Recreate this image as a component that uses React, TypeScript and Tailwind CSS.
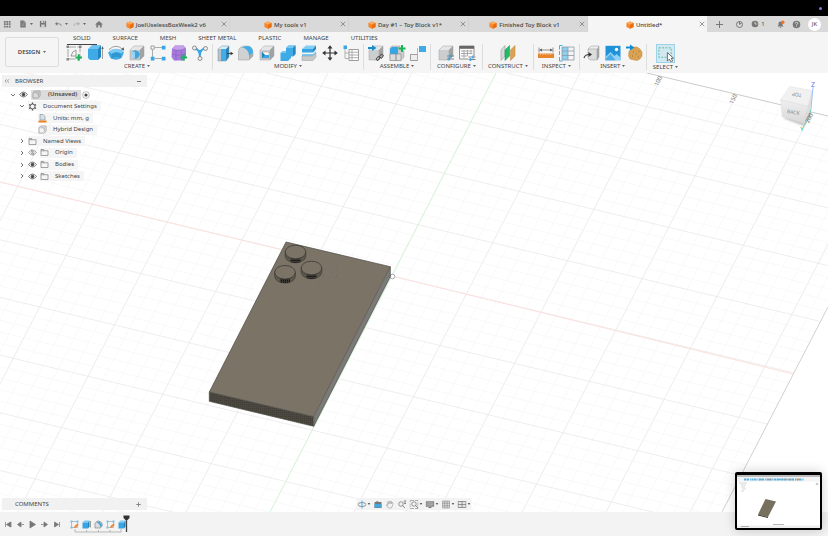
import type { ReactNode } from "react";

interface IconProps {
  children: ReactNode;
  className?: string;
}

interface ToolGroup {
  name: string;
  pad: string;
  tools: { label: string; icon: ReactNode }[];
}

interface TreeItem {
  name: string;
  indent: string;
  arrow?: "open" | "closed";
  eye?: "on" | "off";
  icon: ReactNode;
  root?: boolean;
}

function Icon({ children, className = "size-[18px]" }: IconProps) {
  return (
    <svg viewBox="0 0 18 18" className={`shrink-0 ${className}`} fill="none" aria-hidden="true">
      {children}
    </svg>
  );
}

function Caret({ className = "w-[3px] h-[2px]" }: { className?: string }) {
  return (
    <svg viewBox="0 0 6 4" className={`shrink-0 ${className}`} aria-hidden="true">
      <path d="M0 0h6L3 4z" fill="#666" />
    </svg>
  );
}

// grey box used by several tools, optionally with something drawn over it
function GreyBox({ children }: { children?: ReactNode }) {
  return (
    <Icon>
      <path d="M2 6l4-4h10l-4 4z" fill="#e6e6e6" />
      <path d="M12 6l4-4v10l-4 4z" fill="#a2a2a2" />
      <path d="M2 6h10v10H2z" fill="#cbcdce" />
      <path d="M2 6l4-4h10v10l-4 4H2zM12 16V6l4-4" stroke="#a3a3a3" strokeWidth=".5" />
      {children}
    </Icon>
  );
}

const greenPlus = <path d="M10.500 13.500h6.500M13.750 10.250v6.500" stroke="#17b558" strokeWidth="2" />;

const groups: ToolGroup[] = [
  {
    name: "CREATE",
    pad: "px-[3px]",
    tools: [
      {
        label: "Create sketch",
        icon: (
          <Icon>
            <path d="M3 3h12v12H3z" stroke="#888" strokeWidth=".7" strokeDasharray="8 1.500" />
            <path d="M6 12h5V6Q7 7 6 12z" stroke="#777" strokeWidth=".7" />
            <path d="M1.500 1.500h2.500v2.500H1.500zM14 1.500h2.500v2.500H14zM1.500 14h2.500v2.500H1.500z" fill="#888" />
            {greenPlus}
          </Icon>
        ),
      },
      {
        label: "Extrude",
        icon: (
          <Icon>
            <path d="M2 5l4-4h9l-3 4z" fill="#6cc3f1" />
            <path d="M2 5h10v11H4l-2-2z" fill="#3fabe6" />
            <path d="M12 5l3-4v12l-3 3z" fill="#2385bf" />
            <path d="M16.500 4v11" stroke="#777" strokeWidth=".7" />
            <path d="M15.400 5l1.100-3 1.100 3z" fill="#555" />
          </Icon>
        ),
      },
      {
        label: "Revolve",
        icon: (
          <Icon>
            <path d="M1 8.500Q9 3 17 8.500L14.500 14Q9 17.500 3.500 14z" fill="#3fabe6" />
            <path d="M2 7Q9 2.500 17 7l-3 2.500Q9 6.500 4.500 10z" fill="#7bcaf2" />
            <path d="M4.500 10Q9 7 14 10v4Q9 11 4.500 15z" fill="#2f96d1" />
            <path d="M2 5.500Q9-1 16 5.500" stroke="#777" strokeWidth=".7" />
            <path d="M14.200 5.500l3 1-.7-3.200z" fill="#555" />
          </Icon>
        ),
      },
      {
        label: "Hole",
        icon: (
          <GreyBox>
            <circle cx="7.200" cy="10.500" r="4" fill="#fff" stroke="#888" strokeWidth=".5" />
            <path d="M4 8.500a4 4 0 1 1 1.500 5.500z" fill="#3fa5de" />
            <path d="M4 8a4 4 0 0 1 3 0v6H4.500z" fill="#9ad3ef" />
          </GreyBox>
        ),
      },
      {
        label: "Rectangular pattern",
        icon: (
          <Icon>
            <path d="M6 3.500h7M3.500 6v7M6 14.500h7" stroke="#999" strokeWidth=".8" />
            <path d="M2 2h3.200v3.200H2z" fill="#fff" stroke="#777" strokeWidth=".7" />
            <path d="M12.800 1.800h3.700v3.700h-3.700zM1.800 12.800h3.700v3.700H1.800zM12.800 12.800h3.700v3.700h-3.700z" fill="#36a6e6" />
          </Icon>
        ),
      },
      {
        label: "Create form",
        icon: (
          <Icon>
            <path d="M2 5l3-3.500h8.500L16 5v8l-3 3.500H4L1.500 13z" fill="#a67adb" />
            <path d="M2 5l3-3.500h8.500L16 4l-4.500 2H5z" fill="#c3a0e8" />
            <path d="M2 5q4 2 9.500 1L16 4M11.500 6v10.500M6 6v10.500M2 10q5 2 9.500 1l4.500-2" stroke="#8656c0" strokeWidth=".5" />
            {greenPlus}
          </Icon>
        ),
      },
      {
        label: "Automated modeling",
        icon: (
          <Icon>
            <path d="M3.500 4.500Q9 5 9 14M14.500 4.500Q9 5 9 11M7 7h4" stroke="#36a6e6" strokeWidth="1.900" />
            <circle cx="3.500" cy="4" r="2" fill="#eee" stroke="#777" strokeWidth=".8" />
            <circle cx="14.500" cy="4.500" r="2" fill="#eee" stroke="#777" strokeWidth=".8" />
            <circle cx="9" cy="14.500" r="2" fill="#eee" stroke="#777" strokeWidth=".8" />
          </Icon>
        ),
      },
    ],
  },
  {
    name: "MODIFY",
    pad: "px-[3px]",
    tools: [
      {
        label: "Press pull",
        icon: (
          <Icon>
            <path d="M2 5l4-3h7l-3 3z" fill="#d8edf6" />
            <path d="M2 5h5v12H2z" fill="#b9c2c6" />
            <path d="M5 5h5v12H5z" fill="#43ace6" />
            <path d="M10 5l3-3v11l-3 4z" fill="#2683bb" />
            <path d="M2 5l4-3h7v11l-3 4H2z" stroke="#7790a0" strokeWidth=".5" />
            <path d="M11 9.500h4" stroke="#333" strokeWidth=".8" />
            <path d="M14.500 7.800l3 1.700-3 1.700z" fill="#333" />
          </Icon>
        ),
      },
      {
        label: "Fillet",
        icon: (
          <Icon>
            <path d="M1.500 8Q1.500 2 8 2h2q6 0 6 7v3l-4 4H1.500z" fill="#cfd1d2" stroke="#999" strokeWidth=".5" />
            <path d="M5 3.500Q8 1.500 11 2q5 1 5 7l-4 3q0-7-7-8.500z" fill="#43ace6" />
            <path d="M12 12v4l4-4V9z" fill="#aaa" />
          </Icon>
        ),
      },
      {
        label: "Shell",
        icon: (
          <GreyBox>
            <path d="M4 8h7v6H4z" fill="#fff" stroke="#888" strokeWidth=".5" />
            <path d="M4 8l3 3h4v3H4z" fill="#36a6e6" />
            <path d="M4 8v6l3-3z" fill="#2180b8" />
          </GreyBox>
        ),
      },
      {
        label: "Combine",
        icon: (
          <Icon>
            <path d="M1.500 9l2.500-2h3V4l2.500-2.500h7V10L14 12.500h-2V14l-3 3H1.500z" fill="#3fabe6" />
            <path d="M7 4l2.500-2.500h7L14 4zM1.500 9L4 7h3v2z" fill="#76c8f2" />
            <path d="M14 4l2.500-2.500V10L14 12.500z" fill="#2887c0" />
          </Icon>
        ),
      },
      {
        label: "Split body",
        icon: (
          <Icon>
            <path d="M2 5l4-3.500h10L13 5z" fill="#81cdf3" />
            <path d="M2 5h11v3.500H2z" fill="#36a5e2" />
            <path d="M13 5l3-3.500V5l-3 3.500z" fill="#2383bb" />
            <path d="M2 10h11l3-3v2l-3 3H2z" fill="#7cc8ef" />
            <path d="M2 12h11l3-3v4l-3 3.500H2z" fill="#c6c9ca" stroke="#999" strokeWidth=".5" />
          </Icon>
        ),
      },
      {
        label: "Move",
        icon: (
          <Icon>
            <path d="M9 3v12M3 9h12" stroke="#333" strokeWidth="1.200" />
            <path d="M6.500 4.500L9 1.200l2.500 3.300zM6.500 13.500L9 16.800l2.500-3.300zM4.500 6.500L1.200 9l3.300 2.500zM13.500 6.500L16.800 9l-3.300 2.500z" fill="#333" />
          </Icon>
        ),
      },
      {
        label: "Change parameters",
        icon: (
          <Icon>
            <path d="M3 5v9.500h4M3 9h4" stroke="#999" strokeWidth=".7" />
            <path d="M1.500 1.500h3.500v3.500H1.500z" fill="#36a6e6" />
            <path d="M7 5.500h9.500v11H7z" fill="#fff" stroke="#888" strokeWidth=".8" />
            <path d="M7 8.200h9.500M7 11h9.500M7 13.700h9.500M10 5.500v11" stroke="#999" strokeWidth=".8" />
          </Icon>
        ),
      },
    ],
  },
  {
    name: "ASSEMBLE",
    pad: "px-[3px]",
    tools: [
      {
        label: "Insert derive",
        icon: (
          <GreyBox>
            <path d="M1 4h4" stroke="#168bd0" strokeWidth="2" />
            <path d="M5 1l4.500 3L5 7z" fill="#168bd0" />
            <path d="M9 15.500l2-3 2 1-2 3zM12.500 12.500l2-2.500 2 1.500-2 3z" stroke="#444" strokeWidth="1" />
          </GreyBox>
        ),
      },
      {
        label: "New component",
        icon: (
          <Icon>
            <path d="M2 4l2-2h8v3l4 2v6l-3 3.500H2z" fill="#cbcdce" stroke="#999" strokeWidth=".5" />
            <path d="M2 5l2-2h6v7H2z" fill="#36a6e6" />
            <path d="M2 10h6v6.500H2zM8 10h5v6.500H8z" stroke="#888" strokeWidth=".6" fill="#dadcdd" />
            <path d="M10.500 4.500h7M14 1v7" stroke="#17b558" strokeWidth="2" />
          </Icon>
        ),
      },
      {
        label: "Joint",
        icon: (
          <Icon>
            <path d="M1.500 10.500h7v6h-7z" fill="#eee" stroke="#888" strokeWidth=".8" />
            <path d="M8.500 4v13" stroke="#e9a05f" strokeWidth=".9" />
            <path d="M10 2h7v6h-7z" fill="#3fabe6" />
          </Icon>
        ),
      },
    ],
  },
  {
    name: "CONFIGURE",
    pad: "px-[6px]",
    tools: [
      {
        label: "Configure design",
        icon: (
          <GreyBox>
            <path d="M10 12h7M10 15h7" stroke="#777" strokeWidth=".9" />
            <path d="M14 10.500v3M12 13.500v3" stroke="#36a6e6" strokeWidth="1.500" />
          </GreyBox>
        ),
      },
      {
        label: "Configuration table",
        icon: (
          <Icon>
            <path d="M1.500 2h14.500v13H1.500z" fill="#fafafa" stroke="#777" strokeWidth=".8" />
            <path d="M1.500 2h14.500v2.800H1.500z" fill="#666" />
            <path d="M3 7h11.500M3 9.500h11.500M3 12h6M6 6v8M9.500 6v6M13 6v4" stroke="#999" strokeWidth=".8" />
            <path d="M10 12h7.500v5H10z" fill="#f4f4f4" />
            <path d="M10.500 13h7M10.500 15.500h7" stroke="#777" strokeWidth=".9" />
            <path d="M15 11.500v3M12.500 14v3" stroke="#36a6e6" strokeWidth="1.500" />
          </Icon>
        ),
      },
    ],
  },
  {
    name: "CONSTRUCT",
    pad: "px-[5px]",
    tools: [
      {
        label: "Offset plane",
        icon: (
          <Icon>
            <path d="M2 6l4-4.500V12L2 16.500z" fill="#d9d9d9" stroke="#999" strokeWidth=".6" />
            <path d="M6 6l4.500-4.500V12L6 16.500z" fill="#1fbb67" stroke="#12924c" strokeWidth=".5" />
            <path d="M11.500 6L16 1.500V12l-4.500 4.500z" fill="#dda154" stroke="#b98339" strokeWidth=".5" />
          </Icon>
        ),
      },
    ],
  },
  {
    name: "INSPECT",
    pad: "px-[3px]",
    tools: [
      {
        label: "Measure",
        icon: (
          <Icon>
            <path d="M2 3.500v5M16 3.500v5M3 6h12" stroke="#777" strokeWidth=".8" />
            <path d="M2 6l3-1.500v3zM16 6l-3-1.500v3z" fill="#666" />
            <path d="M1 9.500h16v4.500H1z" fill="#e8842b" />
            <path d="M3.500 9.500v1.500M6 9.500v1.500M8.500 9.500v1.500M11 9.500v1.500M13.500 9.500v1.500" stroke="#fbd9b8" strokeWidth=".7" />
          </Icon>
        ),
      },
      {
        label: "Section",
        icon: (
          <Icon>
            <path d="M4 3h6v13H4z" fill="#8bd0f3" />
            <path d="M4 3h12v13H4zM4 7h12M4 11.500h12M10 3v13" stroke="#8a9aa4" strokeWidth=".8" />
            <path d="M4.500 1.500h-3v4M1.500 13v4h3M1.500 7v4" stroke="#36a6e6" strokeWidth=".9" />
          </Icon>
        ),
      },
    ],
  },
  {
    name: "INSERT",
    pad: "px-[3px]",
    tools: [
      {
        label: "Insert mesh",
        icon: (
          <Icon>
            <path d="M5 5l3-3h8l-2 3z" fill="#eee" />
            <path d="M5 5h9v11H7l-2-2z" fill="#dbdcdd" />
            <path d="M14 5l2-3v11l-2 3z" fill="#a5a5a5" />
            <path d="M5 5l3-3h8v11l-2 3H7l-2-2zM5 5h9v11" stroke="#999" strokeWidth=".5" />
            <path d="M1 14q1-3.500 5-3.500" stroke="#444" strokeWidth="1.200" />
            <path d="M5.500 8l3.500 2.500L5.500 13z" fill="#333" />
          </Icon>
        ),
      },
      {
        label: "Canvas",
        icon: (
          <Icon>
            <path d="M1.500 1.800h15v14.400h-15z" fill="#1f92da" />
            <circle cx="12.500" cy="5.500" r="1.700" fill="#fff" />
            <path d="M1.500 13l5-5 4 4 2-2 4 3.500v2.700h-15z" fill="#92d2f5" />
            <path d="M1.500 15l5-5 5 6.200h-10z" fill="#49ace6" />
          </Icon>
        ),
      },
      {
        label: "Insert part",
        icon: (
          <Icon>
            <path d="M4 7l3-2 2-2h3l3 2 2 3v4l-2 3-3 1.500-3-.5-4-1-1.500-3z" fill="#d9a252" stroke="#c38d43" strokeWidth=".5" />
            <path d="M8 8h1M11 10h1M14 7v1M7 12h1M13 13h1" stroke="#9c7338" strokeWidth=".9" />
            <path d="M1 3.500h4" stroke="#168bd0" strokeWidth="2" />
            <path d="M5 .5l4.500 3L5 6.500z" fill="#168bd0" />
          </Icon>
        ),
      },
    ],
  },
];

const folder = (
  <Icon className="size-[9px]">
    <path d="M2 15V3h5.500v2.500H16V15z" stroke="#777" strokeWidth="1.300" />
    <path d="M2 5.500h6" stroke="#777" strokeWidth="1.300" />
  </Icon>
);

const cube = (
  <Icon className="size-[9px]">
    <path d="M2 6l3.500-4H16v10l-3.500 4H2zM5 5.500h7.500v7.500" stroke="#888" strokeWidth="1.300" />
  </Icon>
);

const tree: TreeItem[] = [
  { name: "(Unsaved)", indent: "pl-[8px]", arrow: "open", eye: "on", icon: cube, root: true },
  {
    name: "Document Settings",
    indent: "pl-[17px]",
    arrow: "open",
    icon: (
      <Icon className="size-[9px]">
        <circle cx="9" cy="9" r="5" stroke="#555" strokeWidth="2" />
        <path d="M9 1v3M9 14v3M2 5l2.500 1.500M13.500 11.500L16 13M2 13l2.500-1.500M13.500 6.500L16 5" stroke="#555" strokeWidth="2.500" />
      </Icon>
    ),
  },
  {
    name: "Units: mm, g",
    indent: "pl-[36px]",
    icon: (
      <Icon className="size-[9px]">
        <path d="M4 12V1h6l4 4v7z" fill="#cfe2ee" stroke="#888" strokeWidth="1.200" />
        <path d="M1 13h16v4H1z" fill="#f0811f" />
      </Icon>
    ),
  },
  { name: "Hybrid Design", indent: "pl-[36px]", icon: cube },
  { name: "Named Views", indent: "pl-[17px]", arrow: "closed", icon: folder },
  { name: "Origin", indent: "pl-[17px]", arrow: "closed", eye: "off", icon: folder },
  { name: "Bodies", indent: "pl-[17px]", arrow: "closed", eye: "on", icon: folder },
  { name: "Sketches", indent: "pl-[17px]", arrow: "closed", eye: "on", icon: folder },
];

const documents = ["JoelUselessBoxWeek2 v6", "My tools v1", "Day #1 – Toy Block v1*", "Finished Toy Block v1", "Untitled*"];
const workspaces = ["SOLID", "SURFACE", "MESH", "SHEET METAL", "PLASTIC", "MANAGE", "UTILITIES"];

function FusionCube() {
  return (
    <Icon className="size-[8px]">
      <path d="M9 1l8 3.500v9L9 17.500l-8-4v-9z" fill="#f8862a" />
      <path d="M9 1l8 3.500-8 4-8-4z" fill="#ffab5c" />
      <path d="M9 8.500l8-4v9l-8 4z" fill="#ea6d0e" />
    </Icon>
  );
}

function Eye({ off }: { off?: boolean }) {
  return (
    <Icon className="size-[9px]">
      <path d="M1 9q8-10 16 0-8 10-16 0z" stroke={off ? "#888" : "#555"} strokeWidth="1.500" />
      <circle cx="9" cy="9" r="3" fill={off ? "none" : "#444"} stroke={off ? "#888" : "#555"} strokeWidth="1.500" />
      {off && <path d="M7 3l4 12" stroke="#888" strokeWidth="1.500" />}
    </Icon>
  );
}

function TabBar() {
  return (
    <div className="flex h-4 items-center bg-[#d9d9d9] text-[#444]">
      <div className="flex w-[110px] shrink-0 items-center pl-[3px]">
        <button aria-label="Data panel">
          <Icon className="size-[8px]">
            <path d="M2 2h4v4H2zM7.500 2h4v4h-4zM13 2h4v4h-4zM2 7.500h4v4H2zM7.500 7.500h4v4h-4zM13 7.500h4v4h-4zM2 13h4v4H2zM7.500 13h4v4h-4zM13 13h4v4h-4z" fill="#777" />
          </Icon>
        </button>
        <button aria-label="File" className="ml-[8px] flex items-center gap-[3px]">
          <Icon className="size-[8px]">
            <path d="M3 1h8l4 4v12H3z" fill="#777" />
            <path d="M11 1v4h4M6 9h6M6 12h6" stroke="#bbb" strokeWidth="1.200" />
          </Icon>
          <Caret />
        </button>
        <button aria-label="Save" className="ml-[6px]">
          <Icon className="size-[8px]">
            <path d="M2 2h14v14H2z" fill="#777" />
            <path d="M5 2h8v5H5zM5 10h8v6H5z" fill="#ccc" />
            <path d="M9 3h2v3H9z" fill="#777" />
          </Icon>
        </button>
        <button aria-label="Undo" className="ml-[8px] flex items-center gap-[3px]">
          <Icon className="size-[7px]">
            <path d="M4 7h6q6 0 6 6" stroke="#777" strokeWidth="2" />
            <path d="M0 7l6-5v10z" fill="#777" />
          </Icon>
          <Caret />
        </button>
        <button aria-label="Redo" className="ml-[5px] flex items-center gap-[3px]">
          <Icon className="size-[7px]">
            <path d="M14 7H8q-6 0-6 6" stroke="#aaa" strokeWidth="2" />
            <path d="M18 7l-6-5v10z" fill="#aaa" />
          </Icon>
          <Caret />
        </button>
        <button aria-label="Home" className="ml-[9px]">
          <Icon className="size-[8px]">
            <path d="M0 10l9-8 9 8h-3v7h-4v-5H7v5H3v-7z" fill="#777" />
          </Icon>
        </button>
      </div>
      <nav className="flex h-full flex-1">
        {documents.map((doc, i) => (
          <div key={doc} className={`flex h-full flex-1 items-center pr-[2px] pl-px ${i === 4 ? "bg-[#f5f5f5]" : "border-r border-[#d2d2d2]"}`}>
            <button className="flex flex-1 items-center justify-center gap-[2px] whitespace-nowrap pt-[2px] text-[6px] font-medium">
              <FusionCube />
              {doc}
            </button>
            <button aria-label={`Close ${doc}`}>
              <svg viewBox="0 0 8 8" className="size-[6px]" fill="none">
                <path d="M1 1l6 6M7 1L1 7" stroke="#777" strokeWidth="1" />
              </svg>
            </button>
          </div>
        ))}
      </nav>
      <div className="flex w-[121px] shrink-0 items-center justify-between pr-[7px] pl-[8px] text-[6px]">
        <button aria-label="New tab">
          <Icon className="size-[9px]">
            <path d="M9 2v14M2 9h14" stroke="#777" strokeWidth="2" />
          </Icon>
        </button>
        <button aria-label="Extensions" className="ml-[4px]">
          <Icon className="size-[9px]">
            <circle cx="9" cy="9" r="6" stroke="#777" strokeWidth="2" />
            <path d="M9 9V3M9 9l4-3" stroke="#777" strokeWidth="2" />
          </Icon>
        </button>
        <button className="flex items-center gap-[2px]">
          <Icon className="size-[8px]">
            <circle cx="9" cy="9" r="7.500" fill="#777" />
            <path d="M9 4v5h5" stroke="#ddd" strokeWidth="1.700" />
          </Icon>
          1
        </button>
        <button aria-label="Notifications" className="ml-[4px]">
          <Icon className="size-[9px]">
            <path d="M3 13l2-3V7q0-4 4-4t4 4v3l2 3zM7 14h4l-2 2z" fill="#777" />
            <circle cx="13.500" cy="4.500" r="3.500" fill="#ef7420" />
          </Icon>
        </button>
        <button aria-label="Help">
          <Icon className="size-[9px]">
            <circle cx="9" cy="9" r="7.500" fill="#777" />
            <path d="M6.500 7q0-2.500 2.500-2.500T11.500 7Q11.500 8.500 9 9.500v1.500M9 12.500v1.500" stroke="#eee" strokeWidth="1.500" />
          </Icon>
        </button>
        <button className="flex size-[13px] items-center justify-center rounded-full bg-white text-[6px]">JK</button>
      </div>
    </div>
  );
}

function Toolbar() {
  return (
    <div className="flex h-[41px] bg-[#f5f5f5] text-[6px] leading-[8px] text-[#444]">
      <button className="mt-[5px] mr-[3px] ml-[5px] flex h-[30px] w-[54px] shrink-0 items-center justify-center gap-[3px] rounded-[2px] border border-[#ddd] font-semibold">
        DESIGN <Caret />
      </button>
      <div className="flex flex-col">
        <div className="flex h-[12px] gap-[22px] pl-[11px]">
          {workspaces.map((name, i) => (
            <button key={name} className="relative whitespace-nowrap">
              {name}
              {i === 0 && <span className="absolute -right-[6px] -bottom-px -left-[6px] h-px bg-[#444]" />}
            </button>
          ))}
        </div>
        <div className="flex">
          {groups.map((group) => (
            <div key={group.name} className={`flex h-[26px] flex-col items-center border-r border-[#ddd] ${group.pad}`}>
              <div className="flex gap-[3px]">
                {group.tools.map((tool) => (
                  <button key={tool.label} aria-label={tool.label}>
                    {tool.icon}
                  </button>
                ))}
              </div>
              <button className="flex items-center gap-[2px]">
                {group.name} <Caret />
              </button>
            </div>
          ))}
          <div className="flex flex-col items-center px-[6px]">
            <button aria-label="Window select" className="border border-[#9ed2e8] bg-[#d3e9f2]">
              <Icon className="size-[17px]">
                <path d="M2 3h13v10H2z" stroke="#3fae86" strokeWidth=".8" strokeDasharray="2 1.500" />
                <path d="M11 8v9l2-2 2 3 1.500-1-1.500-3h2.500z" fill="#fff" stroke="#444" strokeWidth=".8" />
              </Icon>
            </button>
            <button className="flex items-center gap-[2px]">
              SELECT <Caret />
            </button>
          </div>
        </div>
      </div>
    </div>
  );
}

// Lines running with the green axis, spaced along the red one, and the other way round.
// A major line stands at every fifth step.
const steps = Array.from({ length: 96 }, (_, i) => i - 55);
const steepLines = steps.filter((i) => i <= 26);
const flatLines = steps.filter((i) => i >= -23);

function Scene() {
  return (
    <svg viewBox="0 73 828 439" preserveAspectRatio="xMinYMin slice" className="absolute inset-0 size-full" fill="none" role="img" aria-label="Model view">
      <defs>
        <clipPath id="grid">
          <path d="M0 73h647l302 72L828 307 707 542H0z" />
        </clipPath>
        <pattern id="dots" width="2" height="2" patternUnits="userSpaceOnUse">
          <rect width="1" height="1" fill="#000" />
        </pattern>
      </defs>
      <g clipPath="url(#grid)">
        {steepLines.map((i) => (
          <line key={i} x1={496 + i * 16.8} y1="73" x2={265 + i * 16.8} y2="522" stroke={i % 5 === 0 ? "#e4e4e4" : "#f6f6f6"} strokeWidth=".7" />
        ))}
        {flatLines.map((i) => (
          <line key={i} x1="0" y1={182 + i * 11.54} x2="828" y2={381 + i * 11.54} stroke={i % 5 === 0 ? "#e6e6e6" : "#f6f6f6"} strokeWidth=".7" />
        ))}
      </g>
      <path d="M647 73l181 43" stroke="#b5b5b5" strokeWidth=".7" />
      <path d="M828 307L722 512" stroke="#bbb" strokeWidth=".7" />
      <path d="M0 182L392 276 793 374" stroke="#fde0de" />
      <path d="M496 73L392 276 270 512" stroke="#d6f8da" />
      <g fill="#777" fontSize="6" textAnchor="middle" fontFamily="Noto Sans, sans-serif">
        <text transform="translate(660 82) rotate(-64)">100</text>
        <text transform="translate(735 100) rotate(-64)">150</text>
      </g>

      <circle cx="392.500" cy="276.500" r="2.300" fill="#fff" stroke="#aaa" />
      <path d="M286 242l104.300 24.700-76.600 150L209.300 392z" fill="#7b7466" />
      <path d="M209.300 392l104.400 24.700v9.600l-104.400-25z" fill="#4a483f" />
      <path d="M209.300 392l104.400 24.700v9.600l-104.400-25z" fill="url(#dots)" opacity=".15" />
      <path d="M390.300 266.700v10l-76.600 149.600v-9.600z" fill="#7b7a78" />
      <path d="M286 242l104.300 24.700v10l-76.600 149.600-104.400-25V392zM209.300 392l104.400 24.700 76.600-150M313.700 416.700v9.600" stroke="#4b4943" strokeWidth=".7" />
      {[
        [295.500, 252],
        [311.500, 268],
        [285, 272.300],
      ].map(([x, y]) => (
        <g key={x} transform={`translate(${x} ${y})`}>
          <path d="M-10.300 0v4a10.300 6.800 0 0 0 20.600 0V0z" fill="#5d584e" stroke="#34322d" strokeWidth=".6" />
          <path d="M-5 5.500v4.400q5 1.600 10 0v-4.400z" fill="#3c3a34" />
          <path d="M-5 7v3q5 1.500 10 0V7z" fill="url(#dots)" />
          <ellipse rx="10.300" ry="6.800" fill="#7b7466" stroke="#34322d" strokeWidth=".7" />
        </g>
      ))}
      <path d="M323 275h1M332 272h1M329 278h1M336 269h1M336 276h1M318 283h1M325 284h1" stroke="#696357" strokeWidth=".8" />
    </svg>
  );
}

function ViewCube() {
  return (
    <svg viewBox="776 78 52 58" className="absolute top-[5px] right-0 h-[58px] w-[52px]" fill="none" role="img" aria-label="View cube">
      <defs>
        <linearGradient id="cubeFront" x1="0" y1="0" x2="0" y2="1">
          <stop offset="0" stopColor="#efefef" />
          <stop offset="1" stopColor="#d8d8d8" />
        </linearGradient>
        <filter id="soft">
          <feGaussianBlur stdDeviation="1.200" />
        </filter>
      </defs>
      <path d="M783 118l21 8 6-12-3-4z" fill="#999" opacity=".6" filter="url(#soft)" />
      <path d="M789.700 86.500l22.600 4.200-4.300 15.600-27.300-6.300z" fill="#f1f1f1" stroke="#dedede" strokeWidth=".5" />
      <path d="M780.700 100l27.300 6.300-4 17-21.700-6.600z" fill="url(#cubeFront)" stroke="#dadada" strokeWidth=".5" />
      <path d="M812.300 90.700L808 106.300l-4 17 6-11z" fill="#dcdcdc" />
      <path d="M813 87l-2 22" stroke="#84b3f4" strokeWidth=".8" />
      <path d="M811 109l-2 9-6 9" stroke="#4cc4a0" strokeWidth=".8" />
      <g fontFamily="Noto Sans, sans-serif" textAnchor="middle">
        <text transform="translate(797 93) rotate(190)" fontSize="5" fill="#888">TOP</text>
        <text transform="translate(793 114) rotate(9)" fontSize="5" fill="#888">BACK</text>
        <text transform="translate(811 119) rotate(-64)" fontSize="6" fill="#666">200</text>
        <text x="813" y="87" fontSize="7" fill="#7772ee">Z</text>
        <text x="802" y="131" fontSize="6" fill="#13ad74">Y</text>
      </g>
    </svg>
  );
}

function BrowserPanel() {
  return (
    <aside className="relative ml-[2px] w-[145px] pt-[2px] text-[6px] text-[#444]">
      <div className="flex h-[12px] items-center bg-[#f1f1f1] px-[2px]">
        <button aria-label="Collapse browser">
          <Icon className="size-[6px]">
            <path d="M8 4L3 9l5 5M15 4l-5 5 5 5" stroke="#777" strokeWidth="2" />
          </Icon>
        </button>
        <h2 className="ml-[5px] flex-1">BROWSER</h2>
        <button aria-label="Minimize" className="mr-[4px] h-px w-[4px] bg-[#777]" />
      </div>
      <ul className="mt-[2px] grid h-[93px] grid-rows-8">
        {tree.map((item) => (
          <li key={item.name} className={`flex items-center ${item.indent}`}>
            {item.arrow && (
              <button aria-label={`Toggle ${item.name}`} className="mr-[3px]">
                <Icon className="size-[6px]">
                  <path d={item.arrow === "open" ? "M3 6l6 6 6-6" : "M6 3l6 6-6 6"} stroke="#555" strokeWidth="2.500" />
                </Icon>
              </button>
            )}
            {item.eye && (
              <button aria-label={`Visibility of ${item.name}`} className="mr-[3px]">
                <Eye off={item.eye === "off"} />
              </button>
            )}
            <span className={`flex h-[10px] items-center whitespace-nowrap ${item.root ? "gap-[7px] bg-[#dcdcdc] pr-[4px] pl-px font-semibold" : "gap-[6px] bg-[#f5f5f5] pr-[4px]"}`}>
              {item.icon}
              {item.name}
            </span>
            {item.root && (
              <Icon className="ml-px size-[8px]">
                <circle cx="9" cy="9" r="7.500" stroke="#888" strokeWidth="1.300" />
                <circle cx="9" cy="9" r="3.500" fill="#444" />
              </Icon>
            )}
          </li>
        ))}
      </ul>
    </aside>
  );
}

const navTools = [
  {
    label: "Orbit",
    caret: true,
    icon: (
      <>
        <ellipse cx="9" cy="9" rx="8" ry="4" stroke="#777" strokeWidth="1.500" />
        <path d="M9 1v16" stroke="#36a6e6" strokeWidth="1.700" />
      </>
    ),
  },
  {
    label: "Look at",
    icon: (
      <>
        <path d="M2 4h3l2-2 4 2h5v12H2z" fill="#777" />
        <path d="M2 8h14v7H2z" fill="#42a9df" />
      </>
    ),
  },
  {
    label: "Pan",
    icon: <path d="M6 16l-5-6q2-2 4 1L4 4q2-1 3 4V2q2-1 2.500 5L11 2q2 0 1 6l2-3q2 0 0 6l-2 5z" stroke="#999" strokeWidth="1.200" />,
  },
  {
    label: "Zoom",
    icon: (
      <>
        <circle cx="7" cy="8" r="4.500" stroke="#777" strokeWidth="1.500" />
        <path d="M10 11l5 5M15 1v7M13 3l2-2 2 2M13 7h4" stroke="#777" strokeWidth="1.600" />
      </>
    ),
  },
  {
    label: "Fit",
    caret: true,
    icon: (
      <>
        <path d="M1 1h16v16H1z" stroke="#999" strokeWidth="1.500" strokeDasharray="8 2" />
        <circle cx="9" cy="8" r="4.500" stroke="#777" strokeWidth="1.500" />
        <path d="M12 11l5 5" stroke="#777" strokeWidth="1.700" />
      </>
    ),
  },
  {
    label: "Display settings",
    caret: true,
    icon: (
      <>
        <path d="M1 3h16v10H1z" fill="#999" stroke="#777" />
        <path d="M4 6h10M4 9h10" stroke="#bbb" />
        <path d="M6 14h6v2H6z" fill="#777" />
      </>
    ),
  },
  {
    label: "Grid and snaps",
    caret: true,
    icon: <path d="M2 2h14v14H2zM6.500 2v14M11.500 2v14M2 6.500h14M2 11.500h14" fill="#ddd" stroke="#888" strokeWidth="1.200" />,
  },
  {
    label: "Viewports",
    caret: true,
    icon: <path d="M1 3h16v12H1zM9 3v12M1 9h16" fill="#e5e5e5" stroke="#777" strokeWidth="1.500" />,
  },
];

function Thumbnail() {
  return (
    <button aria-label="Screenshot preview" className="absolute right-[6px] bottom-[6px] h-[58px] w-[87px] overflow-hidden rounded-[2px] border-2 border-black bg-white shadow-[0_0_12px_rgba(0,0,0,0.2)]">
      <svg viewBox="0 0 83 54" className="size-full" fill="none">
        <path d="M0 0h83v1H0z" fill="#000" />
        <path d="M0 1h83v2H0z" fill="#bbb" />
        <path d="M0 3h83v4.500H0z" fill="#f4f4f4" />
        <path d="M7 5.500h60" stroke="#5bb0e0" strokeWidth="1.800" strokeDasharray="2 .5 2.500 .9 1 .6" />
        <path d="M22 5.500h4M31 5.500h5M42 5.500h18" stroke="#999" strokeWidth="1.400" strokeDasharray="1 1.300" />
        <path d="M60 5.500h2" stroke="#e58b3a" strokeWidth="1.600" />
        <path d="M2 9h8M4 11h5M4 13h4M5 15h4M4 17h3" stroke="#bbb" strokeWidth=".6" />
        <path d="M28.500 25l10.500 2.500-8 15.500L21 40.500z" fill="#77705f" />
        <path d="M21 40.500L31 43v1l-10-2.500z" fill="#33312c" />
        <circle cx="80" cy="10" r="1.300" fill="#ccc" />
        <path d="M0 51.500h83V54H0z" fill="#eee" />
        <path d="M36 50.500h11M4 52.500h8" stroke="#999" strokeWidth=".7" />
      </svg>
    </button>
  );
}

function Timeline() {
  const sketch = (
    <Icon className="size-[9px]">
      <path d="M3 3h12v12H3z" stroke="#999" strokeWidth="1.200" />
      <path d="M1 1h4v4H1zM13 1h4v4h-4zM1 13h4v4H1z" fill="#7dbfe2" />
      <path d="M8 16l1-4 6-5 2.500 2.500L12 15z" fill="#ee8836" />
    </Icon>
  );
  const extrude = (
    <Icon className="size-[9px]">
      <path d="M1 5l4-4h10l-3 4z" fill="#7bcaf2" />
      <path d="M1 5h11v12H1z" fill="#36a5e2" />
      <path d="M12 5l3-4v12l-3 4z" fill="#2383bb" />
      <path d="M17 2v13" stroke="#666" strokeWidth="1.200" />
    </Icon>
  );
  const fillet = (
    <Icon className="size-[9px]">
      <path d="M2 16V7q2-5 7-5 8 1 8 9l-4 5z" fill="#ddd" stroke="#777" strokeWidth="1.200" />
      <path d="M7 3q8 0 9 9l-4 2q0-7-7-9z" fill="#4aa8dc" />
    </Icon>
  );
  const features = [sketch, extrude, fillet, sketch, extrude];
  const controls = [
    { label: "Go to start", d: "M3 4v10M5 9l8-5v10zM14 4v10" },
    { label: "Step back", d: "M3 9l7-5v10zM11 9h5" },
    { label: "Play", d: "M4 2l11 7-11 7z" },
    { label: "Step forward", d: "M15 9L8 4v10zM2 9h5" },
    { label: "Go to end", d: "M15 4v10M13 9L5 4v10z" },
  ];

  return (
    <footer className="flex h-6 items-center bg-[#f3f3f3] pt-px pl-[4px]">
      <div className="flex gap-[3px]">
        {controls.map((c) => (
          <button key={c.label} aria-label={c.label}>
            <Icon className="size-[9px]">
              <path d={c.d} fill="#777" stroke="#777" strokeWidth="1.500" />
            </Icon>
          </button>
        ))}
      </div>
      <div className="relative ml-[9px] flex gap-[3px]">
        {features.map((f, i) => (
          <button key={i} aria-label={`Feature ${i + 1}`}>
            {f}
          </button>
        ))}
        <svg viewBox="0 0 60 20" className="absolute top-[-6px] left-0 h-[20px] w-[60px]" fill="none">
          <path d="M5 15v3h46v-3M16.500 16v2M28.500 16v2M40 16v2" stroke="#aaa" strokeWidth=".8" />
          <path d="M56.500 4v14" stroke="#444" strokeWidth="1.300" />
          <path d="M53.500 1.500h6V4l-2 2h-2l-2-2z" fill="#333" />
        </svg>
      </div>
    </footer>
  );
}

function App() {
  return (
    <div className="relative flex min-h-screen flex-col overflow-hidden bg-white font-['Noto_Sans',sans-serif] text-[6px]">
      <header>
        <div className="flex h-4 items-center justify-end bg-black pr-[6px]">
          <span className="size-[3px] rounded-full bg-[#8d72de]" />
        </div>
        <TabBar />
        <Toolbar />
      </header>
      <main className="relative flex flex-1 flex-col overflow-hidden">
        <Scene />
        <ViewCube />
        <BrowserPanel />
        <div className="relative mt-auto flex items-center pb-[2px] text-[#444]">
          <div className="ml-[2px] flex h-[12px] w-[145px] items-center justify-between bg-[#f1f1f1] pr-[6px] pl-[13px]">
            <h2>COMMENTS</h2>
            <button aria-label="Expand comments">
              <Icon className="size-[5px]">
                <path d="M9 1v16M1 9h16" stroke="#777" strokeWidth="3" />
              </Icon>
            </button>
          </div>
          <div className="absolute left-1/2 flex h-[12px] -translate-x-1/2 items-center gap-[3px] bg-[#f3f3f3] px-px">
            {navTools.map((tool) => (
              <button key={tool.label} aria-label={tool.label} className="flex items-center gap-px">
                <Icon className="size-[9px]">{tool.icon}</Icon>
                {tool.caret && <Caret />}
              </button>
            ))}
          </div>
        </div>
      </main>
      <Timeline />
      <Thumbnail />
    </div>
  );
}

export default App;
